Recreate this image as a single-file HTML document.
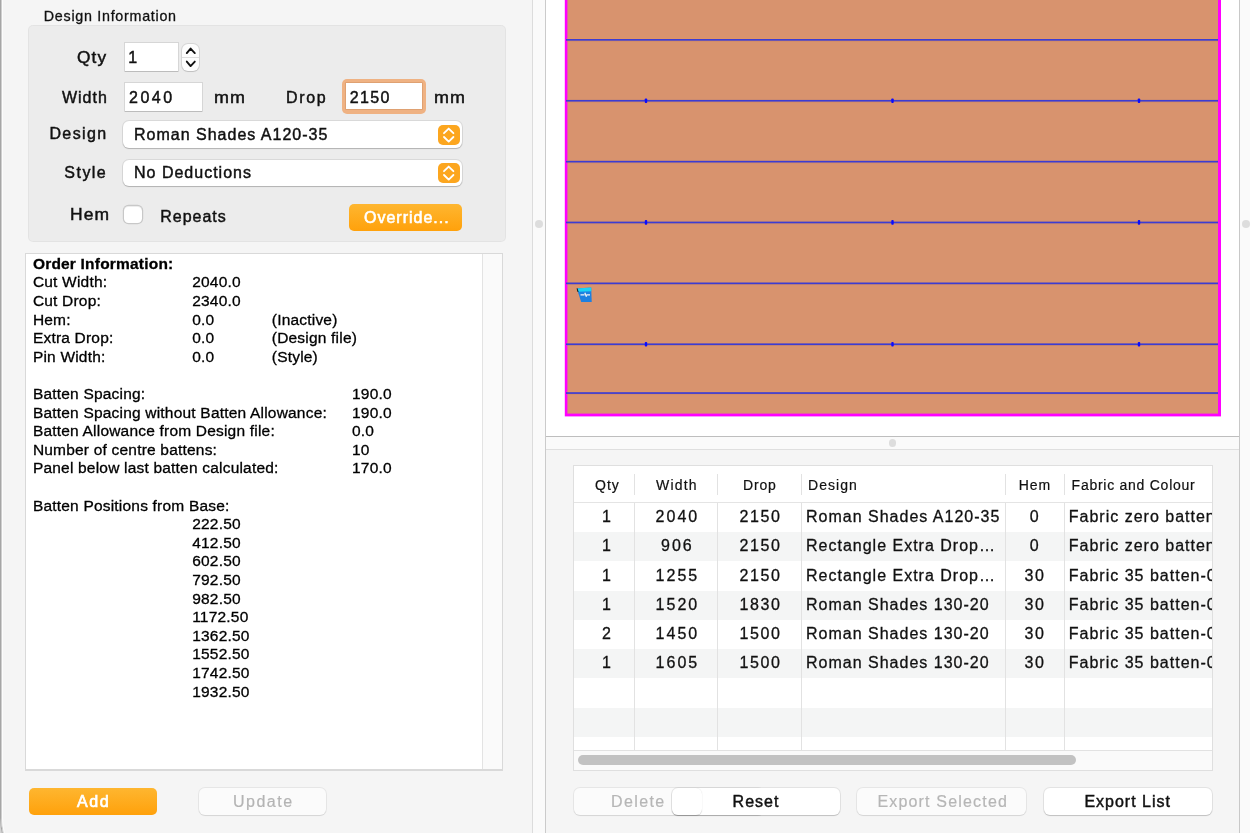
<!DOCTYPE html>
<html><head><meta charset="utf-8">
<style>
html,body{margin:0;padding:0;}
body{width:1250px;height:833px;overflow:hidden;position:relative;background:#f5f5f5;font-family:"Liberation Sans",sans-serif;color:#111;}
.a{position:absolute;}
.t{position:absolute;white-space:pre;font-size:16px;line-height:16px;letter-spacing:1px;-webkit-text-stroke:0.45px currentColor;}
.r{text-align:right;}
.fld{position:absolute;background:#fff;box-shadow:0 0 0 1px rgba(0,0,0,0.09),0 1px 0 0 rgba(0,0,0,0.12);}
.pop{position:absolute;background:#fff;border-radius:6px;box-shadow:0 0 0 1px rgba(0,0,0,0.08),0 1px 1px rgba(0,0,0,0.18);}
.pbtn{position:absolute;border-radius:5px;background:linear-gradient(#feb630,#ffa10b);}
.btn{position:absolute;border-radius:6px;background:#fff;box-shadow:0 0 0 1px rgba(0,0,0,0.07),0 1px 1px rgba(0,0,0,0.16);}
.dis{background:#fbfbfb;box-shadow:0 0 0 1px rgba(0,0,0,0.06),0 1px 1px rgba(0,0,0,0.08);}
.tv{position:absolute;white-space:pre;font-size:15.5px;line-height:18.6px;letter-spacing:0.2px;color:#000;-webkit-text-stroke:0.3px #000;}
</style></head><body><div id="root" style="position:absolute;left:0;top:0;width:1250px;height:833px;overflow:hidden;will-change:transform;">

<div class="a" style="left:0;top:0;width:1px;height:805px;background:#a6a6a6"></div>
<div class="a" style="left:1px;top:0;width:1px;height:805px;background:#cfcfcf"></div>
<div class="a" style="left:2px;top:0;width:1px;height:805px;background:#fcfcfc"></div>
<svg class="a" style="left:0;top:805px" width="12" height="28" viewBox="0 805 12 28"><rect x="0" y="805" width="12" height="28" fill="#f5f5f5"/><path d="M0 805 L0 833 L2.2 833 Q0.2 826 0 818 Z" fill="#d4d4d4"/><path d="M0 805 L1 805 L1 818 Q1.3 827 2.9 833 L1.8 833 Q0.1 826 0 818 Z" fill="#a6a6a6"/><path d="M1 805 L2 805 L2 818 Q2.3 827 3.9 833 L2.9 833 Q1.3 827 1 818 Z" fill="#cfcfcf"/><path d="M2 805 L3 805 L3 818 Q3.3 827 4.9 833 L3.9 833 Q2.3 827 2 818 Z" fill="#fcfcfc"/></svg>
<div class="t" style="left:43.80px;top:9.40px;font-size:14.3px;line-height:14.3px;letter-spacing:0.72px;-webkit-text-stroke:0.3px #111;">Design Information</div>
<div class="a" style="left:28px;top:25px;width:477.5px;height:217px;background:#ececec;border-radius:5px;box-shadow:inset 0 0 0 1px rgba(0,0,0,0.035)"></div>
<div class="t" style="left:77.20px;top:50.16px;transform:scaleX(1.08);transform-origin:0 0;">Qty</div>
<div class="t" style="left:0;width:107.80px;text-align:right;top:90.06px;">Width</div>
<div class="t" style="left:0;width:107.60px;text-align:right;top:126.36px;letter-spacing:1.4px;">Design</div>
<div class="t" style="left:0;width:107.20px;text-align:right;top:164.96px;letter-spacing:1.45px;">Style</div>
<div class="t" style="left:70.20px;top:207.16px;transform:scaleX(1.09);transform-origin:0 0;">Hem</div>
<div class="fld" style="left:124.8px;top:43px;width:53.3px;height:27.8px;"></div>
<div class="t" style="left:128.20px;top:50.46px;">1</div>
<div class="a" style="left:181.7px;top:43.8px;width:17.7px;height:27.7px;border-radius:6px;background:#fdfdfd;box-shadow:0 0 0 1px rgba(0,0,0,0.09),0 1px 1px rgba(0,0,0,0.10);"></div>
<div class="a" style="left:182px;top:57px;width:17px;height:1px;background:#dedede"></div>
<svg class="a" style="left:180px;top:43px" width="22" height="30" viewBox="0 0 22 30"><path d="M6.8 10.1 L10.6 5.6 L14.8 10.1" fill="none" stroke="#111" stroke-width="1.9" stroke-linecap="round" stroke-linejoin="round"/><path d="M6.8 18.6 L10.6 23.1 L14.8 18.6" fill="none" stroke="#111" stroke-width="1.9" stroke-linecap="round" stroke-linejoin="round"/></svg>
<div class="fld" style="left:124.6px;top:83px;width:77.4px;height:27.5px;"></div>
<div class="t" style="left:129.00px;top:90.06px;letter-spacing:2.5px;">2040</div>
<div class="t" style="left:213.60px;top:90.06px;transform:scaleX(1.12);transform-origin:0 0;">mm</div>
<div class="t" style="left:285.90px;top:90.06px;letter-spacing:1.7px;">Drop</div>
<div class="a" style="left:341.8px;top:79.2px;width:84.4px;height:34.4px;border-radius:5px;background:#efb283;"></div>
<div class="a" style="left:345.8px;top:83.4px;width:76.2px;height:25.8px;background:#fff;box-shadow:0 0 0 0.7px #d99a6c;"></div>
<div class="t" style="left:349.80px;top:90.46px;letter-spacing:1.3px;">2150</div>
<div class="t" style="left:433.50px;top:90.06px;transform:scaleX(1.12);transform-origin:0 0;">mm</div>
<div class="pop" style="left:122.7px;top:121px;width:339.4px;height:27px;"></div>
<div class="t" style="left:134.00px;top:126.76px;">Roman Shades A120-35</div>
<div class="pbtn" style="left:438.4px;top:124.5px;width:21.3px;height:20.2px;background:#fca61f"></div>
<svg class="a" style="left:438.4px;top:124.5px" width="22" height="21" viewBox="0 0 22 21"><path d="M6 8.2 L10.7 3.6 L15.4 8.2" fill="none" stroke="#fff" stroke-width="1.85" stroke-linecap="round" stroke-linejoin="round"/><path d="M6 12 L10.7 16.6 L15.4 12" fill="none" stroke="#fff" stroke-width="1.85" stroke-linecap="round" stroke-linejoin="round"/></svg>
<div class="pop" style="left:122.7px;top:159.7px;width:339.4px;height:26.8px;"></div>
<div class="t" style="left:134.00px;top:165.26px;">No Deductions</div>
<div class="pbtn" style="left:438.4px;top:162.9px;width:21.3px;height:20.1px;background:#fca61f"></div>
<svg class="a" style="left:438.4px;top:162.9px" width="22" height="21" viewBox="0 0 22 21"><path d="M6 8.2 L10.7 3.6 L15.4 8.2" fill="none" stroke="#fff" stroke-width="1.85" stroke-linecap="round" stroke-linejoin="round"/><path d="M6 12 L10.7 16.6 L15.4 12" fill="none" stroke="#fff" stroke-width="1.85" stroke-linecap="round" stroke-linejoin="round"/></svg>
<div class="a" style="left:123.8px;top:205.6px;width:18px;height:17.6px;border-radius:4.5px;background:#fff;box-shadow:0 0 0 1.2px rgba(0,0,0,0.15),inset 0 1px 0 rgba(0,0,0,0.07);"></div>
<div class="t" style="left:160.20px;top:208.86px;">Repeats</div>
<div class="pbtn" style="left:349.4px;top:203.9px;width:113px;height:26.7px;"></div>
<div class="t" style="left:364.00px;top:209.66px;color:#fff;-webkit-text-stroke:0.6px #fff;">Override...</div>
<div class="a" style="left:25px;top:253px;width:478px;height:518px;background:#d9d9d9"></div>
<div class="a" style="left:26px;top:254px;width:476px;height:515px;background:#fff"></div>
<div class="a" style="left:482px;top:254px;width:1px;height:515px;background:#e3e3e3"></div>
<div class="a" style="left:483px;top:254px;width:19px;height:515px;background:#fafafa"></div>
<div class="tv" style="left:32.9px;top:254.80px;font-weight:700;">Order Information:</div>
<div class="tv" style="left:32.9px;top:273.40px;">Cut Width:</div>
<div class="tv" style="left:192.2px;top:273.40px;">2040.0</div>
<div class="tv" style="left:32.9px;top:292.00px;">Cut Drop:</div>
<div class="tv" style="left:192.2px;top:292.00px;">2340.0</div>
<div class="tv" style="left:32.9px;top:310.60px;">Hem:</div>
<div class="tv" style="left:192.2px;top:310.60px;">0.0</div>
<div class="tv" style="left:271.8px;top:310.60px;">(Inactive)</div>
<div class="tv" style="left:32.9px;top:329.20px;">Extra Drop:</div>
<div class="tv" style="left:192.2px;top:329.20px;">0.0</div>
<div class="tv" style="left:271.8px;top:329.20px;">(Design file)</div>
<div class="tv" style="left:32.9px;top:347.80px;">Pin Width:</div>
<div class="tv" style="left:192.2px;top:347.80px;">0.0</div>
<div class="tv" style="left:271.8px;top:347.80px;">(Style)</div>
<div class="tv" style="left:32.9px;top:385.00px;">Batten Spacing:</div>
<div class="tv" style="left:352px;top:385.00px;">190.0</div>
<div class="tv" style="left:32.9px;top:403.60px;">Batten Spacing without Batten Allowance:</div>
<div class="tv" style="left:352px;top:403.60px;">190.0</div>
<div class="tv" style="left:32.9px;top:422.20px;">Batten Allowance from Design file:</div>
<div class="tv" style="left:352px;top:422.20px;">0.0</div>
<div class="tv" style="left:32.9px;top:440.80px;">Number of centre battens:</div>
<div class="tv" style="left:352px;top:440.80px;">10</div>
<div class="tv" style="left:32.9px;top:459.40px;">Panel below last batten calculated:</div>
<div class="tv" style="left:352px;top:459.40px;">170.0</div>
<div class="tv" style="left:32.9px;top:496.60px;">Batten Positions from Base:</div>
<div class="tv" style="left:192.2px;top:515.20px;">222.50</div>
<div class="tv" style="left:192.2px;top:533.80px;">412.50</div>
<div class="tv" style="left:192.2px;top:552.40px;">602.50</div>
<div class="tv" style="left:192.2px;top:571.00px;">792.50</div>
<div class="tv" style="left:192.2px;top:589.60px;">982.50</div>
<div class="tv" style="left:192.2px;top:608.20px;">1172.50</div>
<div class="tv" style="left:192.2px;top:626.80px;">1362.50</div>
<div class="tv" style="left:192.2px;top:645.40px;">1552.50</div>
<div class="tv" style="left:192.2px;top:664.00px;">1742.50</div>
<div class="tv" style="left:192.2px;top:682.60px;">1932.50</div>
<div class="pbtn" style="left:29.2px;top:788px;width:127.8px;height:26.8px;"></div>
<div class="t" style="left:77.00px;top:793.86px;letter-spacing:1.6px;color:#fff;-webkit-text-stroke:0.7px #fff;">Add</div>
<div class="btn dis" style="left:198.6px;top:788px;width:127.7px;height:26.8px;"></div>
<div class="t" style="left:233.00px;top:793.66px;letter-spacing:1.5px;color:#b4b4b4;-webkit-text-stroke:0.2px #b4b4b4;">Update</div>
<div class="a" style="left:532px;top:0;width:1px;height:833px;background:#dcdcdc"></div>
<div class="a" style="left:533px;top:0;width:12px;height:833px;background:#fafafa"></div>
<div class="a" style="left:545px;top:0;width:1px;height:833px;background:#cbcbcb"></div>
<div class="a" style="left:535px;top:220px;width:8px;height:8px;border-radius:50%;background:#dddddd"></div>
<svg class="a" style="left:546px;top:0" width="693" height="436" viewBox="546 0 693 436">
<rect x="546" y="0" width="693" height="436" fill="#fff"/>
<rect x="564.8" y="-5" width="656.2" height="421.4" fill="#ff00ff"/>
<rect x="567.4" y="-5" width="650.6" height="418.6" fill="#d8936e"/>
<rect x="567" y="38.20" width="651" height="0.8" fill="#e49a5c" opacity="0.6"/>
<rect x="567" y="40.70" width="651" height="0.8" fill="#c9875f" opacity="0.6"/>
<rect x="566" y="39.00" width="652" height="1.7" fill="#3c3cd2"/>
<rect x="567" y="99.10" width="651" height="0.8" fill="#e49a5c" opacity="0.6"/>
<rect x="567" y="101.60" width="651" height="0.8" fill="#c9875f" opacity="0.6"/>
<rect x="566" y="99.90" width="652" height="1.7" fill="#3c3cd2"/>
<rect x="567" y="160.00" width="651" height="0.8" fill="#e49a5c" opacity="0.6"/>
<rect x="567" y="162.50" width="651" height="0.8" fill="#c9875f" opacity="0.6"/>
<rect x="566" y="160.80" width="652" height="1.7" fill="#3c3cd2"/>
<rect x="567" y="220.80" width="651" height="0.8" fill="#e49a5c" opacity="0.6"/>
<rect x="567" y="223.30" width="651" height="0.8" fill="#c9875f" opacity="0.6"/>
<rect x="566" y="221.60" width="652" height="1.7" fill="#3c3cd2"/>
<rect x="567" y="281.70" width="651" height="0.8" fill="#e49a5c" opacity="0.6"/>
<rect x="567" y="284.20" width="651" height="0.8" fill="#c9875f" opacity="0.6"/>
<rect x="566" y="282.50" width="652" height="1.7" fill="#3c3cd2"/>
<rect x="567" y="342.60" width="651" height="0.8" fill="#e49a5c" opacity="0.6"/>
<rect x="567" y="345.10" width="651" height="0.8" fill="#c9875f" opacity="0.6"/>
<rect x="566" y="343.40" width="652" height="1.7" fill="#3c3cd2"/>
<rect x="567" y="391.40" width="651" height="0.8" fill="#e49a5c" opacity="0.6"/>
<rect x="567" y="393.90" width="651" height="0.8" fill="#c9875f" opacity="0.6"/>
<rect x="566" y="392.20" width="652" height="1.7" fill="#3c3cd2"/>
<rect x="644.8" y="98.40" width="2.4" height="4.6" rx="0.8" fill="#0a0aff"/>
<rect x="891.3" y="98.40" width="2.4" height="4.6" rx="0.8" fill="#0a0aff"/>
<rect x="1137.8" y="98.40" width="2.4" height="4.6" rx="0.8" fill="#0a0aff"/>
<rect x="644.8" y="220.10" width="2.4" height="4.6" rx="0.8" fill="#0a0aff"/>
<rect x="891.3" y="220.10" width="2.4" height="4.6" rx="0.8" fill="#0a0aff"/>
<rect x="1137.8" y="220.10" width="2.4" height="4.6" rx="0.8" fill="#0a0aff"/>
<rect x="644.8" y="341.90" width="2.4" height="4.6" rx="0.8" fill="#0a0aff"/>
<rect x="891.3" y="341.90" width="2.4" height="4.6" rx="0.8" fill="#0a0aff"/>
<rect x="1137.8" y="341.90" width="2.4" height="4.6" rx="0.8" fill="#0a0aff"/>
<path d="M576.8 288.6 L591.2 287.6 L591.7 302 L581.2 302 Z" fill="#1e80e0"/>
<path d="M577.2 288.5 L591.2 287.6 L591.3 291.2 L578.3 291.8 Z" fill="#19d3f5"/>
<path d="M576.6 288.4 L577.5 288.2 L578.6 291.9 L577.6 292 Z" fill="#111"/>
<path d="M580.5 294.8 L584.5 294.8 M586.5 294.8 L590 294.8 M584.8 292.8 L586.5 296.8" stroke="#f4f4f4" stroke-width="1.3" fill="none"/>
</svg>
<div class="a" style="left:546px;top:436px;width:693px;height:1px;background:#bebebe"></div>
<div class="a" style="left:1239px;top:0;width:1px;height:833px;background:#c8c8c8"></div>
<div class="a" style="left:1240px;top:0;width:10px;height:833px;background:#fafafa"></div>
<div class="a" style="left:1242px;top:220px;width:8px;height:8px;border-radius:50%;background:#dddddd"></div>
<div class="a" style="left:546px;top:437px;width:693px;height:12px;background:#fafafa"></div>
<div class="a" style="left:546px;top:449px;width:693px;height:1px;background:#dfdfdf"></div>
<div class="a" style="left:888.8px;top:439px;width:7.6px;height:7.6px;border-radius:50%;background:#dddddd"></div>
<div class="a" style="left:573px;top:465px;width:639.5px;height:305.5px;background:#dfdfdf"></div>
<div class="a" style="left:574px;top:466px;width:637.5px;height:303.5px;background:#fff;overflow:hidden">
<div class="a" style="left:0;top:36px;width:640px;height:1px;background:#e4e4e4"></div>
<div class="a" style="left:0;top:66.23px;width:640px;height:29.23px;background:#f4f5f5"></div>
<div class="a" style="left:0;top:124.69px;width:640px;height:29.23px;background:#f4f5f5"></div>
<div class="a" style="left:0;top:183.15px;width:640px;height:29.23px;background:#f4f5f5"></div>
<div class="a" style="left:0;top:241.61px;width:640px;height:29.23px;background:#f4f5f5"></div>
<div class="a" style="left:59.5px;top:8px;width:1px;height:21px;background:#e2e2e2"></div>
<div class="a" style="left:59.5px;top:37px;width:1px;height:247px;background:#e2e2e2"></div>
<div class="a" style="left:143.0px;top:8px;width:1px;height:21px;background:#e2e2e2"></div>
<div class="a" style="left:143.0px;top:37px;width:1px;height:247px;background:#e2e2e2"></div>
<div class="a" style="left:227.0px;top:8px;width:1px;height:21px;background:#e2e2e2"></div>
<div class="a" style="left:227.0px;top:37px;width:1px;height:247px;background:#e2e2e2"></div>
<div class="a" style="left:430.5px;top:8px;width:1px;height:21px;background:#e2e2e2"></div>
<div class="a" style="left:430.5px;top:37px;width:1px;height:247px;background:#e2e2e2"></div>
<div class="a" style="left:490.0px;top:8px;width:1px;height:21px;background:#e2e2e2"></div>
<div class="a" style="left:490.0px;top:37px;width:1px;height:247px;background:#e2e2e2"></div>
<div class="a" style="left:0;top:284px;width:640px;height:1px;background:#e2e2e2"></div>
<div class="a" style="left:0;top:285px;width:640px;height:20px;background:#fafafa"></div>
<div class="a" style="left:4px;top:289px;width:498px;height:10px;border-radius:5px;background:#c2c2c2"></div>
<div class="t" style="left:-116.65px;width:300px;text-align:center;top:11.75px;font-size:14px;line-height:14px;letter-spacing:0.9px;-webkit-text-stroke:0.2px #111;">Qty</div>
<div class="t" style="left:-47.13px;width:300px;text-align:center;top:11.75px;font-size:14px;line-height:14px;letter-spacing:1.15px;-webkit-text-stroke:0.2px #111;">Width</div>
<div class="t" style="left:35.80px;width:300px;text-align:center;top:11.75px;font-size:14px;line-height:14px;letter-spacing:0.8px;-webkit-text-stroke:0.2px #111;">Drop</div>
<div class="t" style="left:234.00px;top:11.75px;font-size:14px;line-height:14px;letter-spacing:1.05px;-webkit-text-stroke:0.2px #111;">Design</div>
<div class="t" style="left:310.85px;width:300px;text-align:center;top:11.75px;font-size:14px;line-height:14px;letter-spacing:0.9px;-webkit-text-stroke:0.2px #111;">Hem</div>
<div class="t" style="left:497.60px;top:11.75px;font-size:14px;line-height:14px;letter-spacing:0.74px;-webkit-text-stroke:0.2px #111;">Fabric and Colour</div>
<div class="t" style="left:-116.70px;width:300px;text-align:center;top:43.06px;letter-spacing:1.6px;-webkit-text-stroke:0.3px #111;">1</div>
<div class="t" style="left:-46.60px;width:300px;text-align:center;top:43.06px;letter-spacing:2.0px;-webkit-text-stroke:0.3px #111;">2040</div>
<div class="t" style="left:36.60px;width:300px;text-align:center;top:43.06px;letter-spacing:1.6px;-webkit-text-stroke:0.3px #111;">2150</div>
<div class="t" style="left:311.00px;width:300px;text-align:center;top:43.06px;letter-spacing:1.6px;-webkit-text-stroke:0.3px #111;">0</div>
<div class="t" style="left:232.00px;top:43.06px;-webkit-text-stroke:0.3px #111;">Roman Shades A120-35</div>
<div class="t" style="left:494.80px;top:43.06px;-webkit-text-stroke:0.3px #111;">Fabric zero batten</div>
<div class="t" style="left:-116.70px;width:300px;text-align:center;top:72.29px;letter-spacing:1.6px;-webkit-text-stroke:0.3px #111;">1</div>
<div class="t" style="left:-46.60px;width:300px;text-align:center;top:72.29px;letter-spacing:2.0px;-webkit-text-stroke:0.3px #111;">906</div>
<div class="t" style="left:36.60px;width:300px;text-align:center;top:72.29px;letter-spacing:1.6px;-webkit-text-stroke:0.3px #111;">2150</div>
<div class="t" style="left:311.00px;width:300px;text-align:center;top:72.29px;letter-spacing:1.6px;-webkit-text-stroke:0.3px #111;">0</div>
<div class="t" style="left:232.00px;top:72.29px;-webkit-text-stroke:0.3px #111;">Rectangle Extra Drop…</div>
<div class="t" style="left:494.80px;top:72.29px;-webkit-text-stroke:0.3px #111;">Fabric zero batten</div>
<div class="t" style="left:-116.70px;width:300px;text-align:center;top:101.52px;letter-spacing:1.6px;-webkit-text-stroke:0.3px #111;">1</div>
<div class="t" style="left:-46.60px;width:300px;text-align:center;top:101.52px;letter-spacing:2.0px;-webkit-text-stroke:0.3px #111;">1255</div>
<div class="t" style="left:36.60px;width:300px;text-align:center;top:101.52px;letter-spacing:1.6px;-webkit-text-stroke:0.3px #111;">2150</div>
<div class="t" style="left:311.00px;width:300px;text-align:center;top:101.52px;letter-spacing:1.6px;-webkit-text-stroke:0.3px #111;">30</div>
<div class="t" style="left:232.00px;top:101.52px;-webkit-text-stroke:0.3px #111;">Rectangle Extra Drop…</div>
<div class="t" style="left:494.80px;top:101.52px;-webkit-text-stroke:0.3px #111;">Fabric 35 batten-0</div>
<div class="t" style="left:-116.70px;width:300px;text-align:center;top:130.75px;letter-spacing:1.6px;-webkit-text-stroke:0.3px #111;">1</div>
<div class="t" style="left:-46.60px;width:300px;text-align:center;top:130.75px;letter-spacing:2.0px;-webkit-text-stroke:0.3px #111;">1520</div>
<div class="t" style="left:36.60px;width:300px;text-align:center;top:130.75px;letter-spacing:1.6px;-webkit-text-stroke:0.3px #111;">1830</div>
<div class="t" style="left:311.00px;width:300px;text-align:center;top:130.75px;letter-spacing:1.6px;-webkit-text-stroke:0.3px #111;">30</div>
<div class="t" style="left:232.00px;top:130.75px;-webkit-text-stroke:0.3px #111;">Roman Shades 130-20</div>
<div class="t" style="left:494.80px;top:130.75px;-webkit-text-stroke:0.3px #111;">Fabric 35 batten-0</div>
<div class="t" style="left:-116.70px;width:300px;text-align:center;top:159.98px;letter-spacing:1.6px;-webkit-text-stroke:0.3px #111;">2</div>
<div class="t" style="left:-46.60px;width:300px;text-align:center;top:159.98px;letter-spacing:2.0px;-webkit-text-stroke:0.3px #111;">1450</div>
<div class="t" style="left:36.60px;width:300px;text-align:center;top:159.98px;letter-spacing:1.6px;-webkit-text-stroke:0.3px #111;">1500</div>
<div class="t" style="left:311.00px;width:300px;text-align:center;top:159.98px;letter-spacing:1.6px;-webkit-text-stroke:0.3px #111;">30</div>
<div class="t" style="left:232.00px;top:159.98px;-webkit-text-stroke:0.3px #111;">Roman Shades 130-20</div>
<div class="t" style="left:494.80px;top:159.98px;-webkit-text-stroke:0.3px #111;">Fabric 35 batten-0</div>
<div class="t" style="left:-116.70px;width:300px;text-align:center;top:189.21px;letter-spacing:1.6px;-webkit-text-stroke:0.3px #111;">1</div>
<div class="t" style="left:-46.60px;width:300px;text-align:center;top:189.21px;letter-spacing:2.0px;-webkit-text-stroke:0.3px #111;">1605</div>
<div class="t" style="left:36.60px;width:300px;text-align:center;top:189.21px;letter-spacing:1.6px;-webkit-text-stroke:0.3px #111;">1500</div>
<div class="t" style="left:311.00px;width:300px;text-align:center;top:189.21px;letter-spacing:1.6px;-webkit-text-stroke:0.3px #111;">30</div>
<div class="t" style="left:232.00px;top:189.21px;-webkit-text-stroke:0.3px #111;">Roman Shades 130-20</div>
<div class="t" style="left:494.80px;top:189.21px;-webkit-text-stroke:0.3px #111;">Fabric 35 batten-0</div>
</div>
<div class="btn dis" style="left:573.7px;top:787.8px;width:190px;height:27.4px;"></div>
<div class="t" style="left:611.00px;top:793.96px;letter-spacing:1.4px;color:#b6b6b6;-webkit-text-stroke:0.2px #b6b6b6;">Delete</div>
<div class="btn" style="left:671.8px;top:787.8px;width:168.6px;height:27.4px;"></div>
<div class="a" style="left:671.8px;top:788px;width:30px;height:27px;border-radius:6px;background:#fff;box-shadow:0 0 1px rgba(0,0,0,0.12),0 1px 1px rgba(0,0,0,0.14);"></div>
<div class="t" style="left:732.60px;top:793.96px;color:#111;">Reset</div>
<div class="btn dis" style="left:857px;top:787.8px;width:169px;height:27.6px;"></div>
<div class="t" style="left:877.40px;top:793.96px;letter-spacing:1.18px;color:#b6b6b6;-webkit-text-stroke:0.2px #b6b6b6;">Export Selected</div>
<div class="btn" style="left:1043.6px;top:787.8px;width:168.6px;height:27.6px;"></div>
<div class="t" style="left:1084.40px;top:793.96px;color:#111;">Export List</div>
</div></body></html>
